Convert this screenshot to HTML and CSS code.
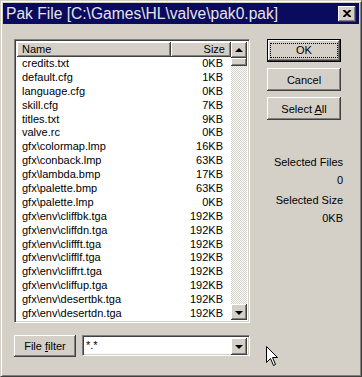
FILE: index.html
```html
<!DOCTYPE html>
<html lang="en">
<head>
    <meta charset="UTF-8">
    <title>Pak File</title>
    <link rel="stylesheet" href="styles.css">
</head>
<body>
    <div class="window">
        <div class="titlebar">
            <span class="title">Pak File [C:\Games\HL\valve\pak0.pak]</span>
            <button class="close">
                <svg width="8" height="7" viewBox="0 0 8 7"><path d="M0 0h2l2 2 2-2h2v1L5 3.5 8 6v1H6L4 5 2 7H0V6l3-2.5L0 1z" fill="#000"/></svg>
            </button>
        </div>
        <div class="content">
            <div class="left">
                <div class="listview">
                    <div class="list-main">
                        <div class="header">
                            <div class="col-name">Name</div>
                            <div class="col-size">Size</div>
                        </div>
                        <div class="rows" id="rows"></div>
                    </div>
                    <div class="scrollbar">
                        <div class="sb-btn"><span class="arrow up"></span></div>
                        <div class="sb-thumb"></div>
                        <div class="sb-track"></div>
                        <div class="sb-btn"><span class="arrow down"></span></div>
                    </div>
                </div>
                <div class="filter-row">
                    <button class="btn filter-btn">File <u>f</u>ilter</button>
                    <div class="combo">
                        <div class="combo-text">*.*</div>
                        <div class="sb-btn"><span class="arrow down"></span></div>
                    </div>
                </div>
            </div>
            <div class="right">
                <button class="btn default"><span class="focus">OK</span></button>
                <button class="btn">Cancel</button>
                <button class="btn">Select <u>A</u>ll</button>
                <div class="info">
                    <div>Selected Files</div>
                    <div>0</div>
                    <div class="gap">Selected Size</div>
                    <div>0KB</div>
                </div>
            </div>
        </div>
        <svg class="cursor" width="13" height="21" viewBox="0 0 13 21">
            <path d="M0.5 0.5 V16.5 L4.5 12.5 L7.5 19.5 L9.5 18.5 L6.5 11.5 H11.5 Z" fill="#fff" stroke="#000" stroke-width="1"/>
        </svg>
    </div>

    <script>
        const files = [
            ['credits.txt', '0KB'],
            ['default.cfg', '1KB'],
            ['language.cfg', '0KB'],
            ['skill.cfg', '7KB'],
            ['titles.txt', '9KB'],
            ['valve.rc', '0KB'],
            ['gfx\\colormap.lmp', '16KB'],
            ['gfx\\conback.lmp', '63KB'],
            ['gfx\\lambda.bmp', '17KB'],
            ['gfx\\palette.bmp', '63KB'],
            ['gfx\\palette.lmp', '0KB'],
            ['gfx\\env\\cliffbk.tga', '192KB'],
            ['gfx\\env\\cliffdn.tga', '192KB'],
            ['gfx\\env\\cliffft.tga', '192KB'],
            ['gfx\\env\\clifflf.tga', '192KB'],
            ['gfx\\env\\cliffrt.tga', '192KB'],
            ['gfx\\env\\cliffup.tga', '192KB'],
            ['gfx\\env\\desertbk.tga', '192KB'],
            ['gfx\\env\\desertdn.tga', '192KB']
        ];
        const rows = document.getElementById('rows');
        files.forEach(function(f) {
            const row = document.createElement('div');
            row.className = 'row';
            row.innerHTML = '<span class="name"></span><span class="size"></span>';
            row.children[0].textContent = f[0];
            row.children[1].textContent = f[1];
            rows.appendChild(row);
        });
    </script>
</body>
</html>
```

FILE: styles.css
```css
body {
    margin: 0;
    font-family: "Liberation Sans", Arial, sans-serif;
    font-size: 11px;
    color: #000;
}
.window {
    position: relative;
    width: 362px;
    height: 377px;
    box-sizing: border-box;
    background: #d4d0c8;
    border: 1px solid;
    border-color: #d4d0c8 #404040 #404040 #d4d0c8;
    box-shadow: inset 1px 1px #fff, inset -1px -1px #808080;
    padding: 2px;
}
.titlebar {
    height: 21px;
    background: #0a0a5e;
    display: flex;
    align-items: center;
    justify-content: space-between;
    padding: 0 3px 0 3px;
}
.title {
    color: #e4e4e4;
    font-size: 15.6px;
}
.close {
    width: 18px;
    height: 16px;
    padding: 0;
    background: #d4d0c8;
    border: none;
    box-shadow: inset -1px -1px #404040, inset 1px 1px #fff, inset -2px -2px #808080;
    display: flex;
    align-items: center;
    justify-content: center;
}
.content {
    display: flex;
    padding: 15px 0 0 11px;
}
.left {
    width: 236px;
}
.listview {
    height: 284px;
    box-sizing: border-box;
    border: 1px solid;
    border-color: #808080 #fff #fff #808080;
    box-shadow: inset 1px 1px #404040, inset -1px -1px #d4d0c8;
    padding: 2px;
    background: #fff;
    display: flex;
}
.list-main {
    flex: 1;
    overflow: hidden;
}
.header {
    display: flex;
    height: 15px;
}
.header div {
    box-sizing: border-box;
    background: #d4d0c8;
    box-shadow: inset -1px -1px #404040, inset 1px 1px #fff, inset -2px -2px #808080;
    line-height: 15px;
}
.col-name {
    width: 154px;
    padding-left: 5px;
}
.col-size {
    flex: 1;
    text-align: right;
    padding-right: 6px;
}
.row {
    display: flex;
    justify-content: space-between;
    height: 13.9px;
    line-height: 13.9px;
    padding: 0 8px 0 5px;
}
.scrollbar {
    width: 16px;
    display: flex;
    flex-direction: column;
}
.sb-btn {
    width: 16px;
    height: 16px;
    box-sizing: border-box;
    background: #d4d0c8;
    box-shadow: inset -1px -1px #404040, inset 1px 1px #fff, inset -2px -2px #808080;
    display: flex;
    align-items: center;
    justify-content: center;
}
.sb-thumb {
    height: 8px;
    background: #d4d0c8;
    box-shadow: inset -1px -1px #404040, inset 1px 1px #fff, inset -2px -2px #808080;
}
.sb-track {
    flex: 1;
    background: repeating-conic-gradient(#d4d0c8 0 25%, #fff 0 50%) 0 0 / 2px 2px;
}
.arrow {
    width: 0;
    height: 0;
    border-left: 4px solid transparent;
    border-right: 4px solid transparent;
}
.arrow.up {
    border-bottom: 4px solid #000;
    margin-top: -1px;
}
.arrow.down {
    border-top: 4px solid #000;
    margin-top: 1px;
}
.filter-row {
    display: flex;
    margin-top: 12px;
    gap: 6px;
}
.btn {
    font-family: "Liberation Sans", Arial, sans-serif;
    font-size: 11px;
    background: #d4d0c8;
    border: none;
    padding: 0;
    box-shadow: inset -1px -1px #404040, inset 1px 1px #fff, inset -2px -2px #808080;
    color: #000;
}
.filter-btn {
    width: 62px;
    height: 22px;
}
.combo {
    flex: 1;
    height: 21px;
    box-sizing: border-box;
    border: 1px solid;
    border-color: #808080 #fff #fff #808080;
    box-shadow: inset 1px 1px #404040, inset -1px -1px #d4d0c8;
    padding: 2px;
    background: #fff;
    display: flex;
}
.combo-text {
    flex: 1;
    padding-left: 1px;
    line-height: 15px;
}
.combo .sb-btn {
    height: 17px;
}
.right {
    display: flex;
    flex-direction: column;
    margin-left: 17px;
    width: 74px;
}
.right .btn {
    height: 23px;
    margin-bottom: 6px;
}
.btn.default {
    box-shadow: inset 0 0 0 1px #000, inset -2px -2px #404040, inset 2px 2px #fff, inset -3px -3px #808080;
    padding: 4px;
}
.focus {
    display: block;
    height: 13px;
    line-height: 13px;
    outline: 1px dotted #000;
}
.info {
    margin-top: 27px;
    margin-right: -2px;
    text-align: right;
    line-height: 18px;
}
.info .gap {
    margin-top: 2px;
}
.cursor {
    position: absolute;
    left: 265px;
    top: 345px;
}
```
